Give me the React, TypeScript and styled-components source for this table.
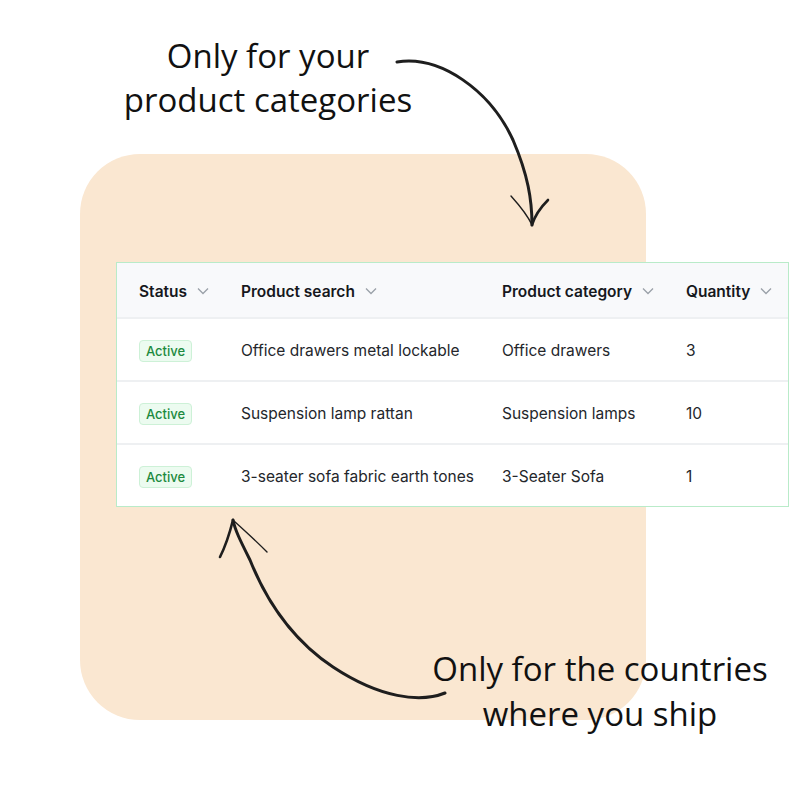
import React from 'react';
import styled, { createGlobalStyle } from 'styled-components';

const GlobalStyle = createGlobalStyle`
  html, body {
    margin: 0;
    padding: 0;
    background: #ffffff;
  }
  * {
    box-sizing: border-box;
  }
`;

const Page = styled.div`
  position: relative;
  width: 800px;
  height: 800px;
  overflow: hidden;
  background: #ffffff;
  font-family: "Open Sans", "Noto Sans", sans-serif;
`;

const TopCaption = styled.div`
  width: 320px;
  margin-left: 108px;
  padding-top: 34px;
  text-align: center;
  font-size: 33px;
  line-height: 44px;
  color: #111;
`;

const Stage = styled.div`
  position: relative;
  margin-top: 32px;
  padding-left: 80px;
`;

const Panel = styled.div`
  width: 566px;
  height: 566px;
  border-radius: 60px;
  background: #fae7d1;
`;

const TableCard = styled.div`
  position: absolute;
  left: 116px;
  top: 108px;
  width: 673px;
  background: #ffffff;
  border: 1px solid #b9ebc9;
  font-family: Inter, "Liberation Sans", sans-serif;
  font-size: 15.5px;
`;

const Row = styled.div<{ $head?: boolean }>`
  display: grid;
  grid-template-columns: 102px 261px 184px 1fr;
  align-items: center;
  height: ${p => (p.$head ? '56px' : '63px')};
  padding: 2px 0 0 22px;
  background: ${p => (p.$head ? '#f8f9fb' : '#ffffff')};
  border-bottom: 2px solid #eef0f2;
  color: #24262b;

  &:last-child {
    border-bottom: none;
    height: 61px;
  }
`;

const HeadCell = styled.div`
  display: flex;
  align-items: center;
  gap: 10px;
  font-weight: 600;
  color: #16181d;
`;

const Cell = styled.div`
  white-space: nowrap;
`;

const Badge = styled.span`
  display: inline-block;
  padding: 2px 6px;
  border: 1px solid #cdf1d7;
  border-radius: 4px;
  background: #ecfbf0;
  color: #1d8a3f;
  font-size: 13px;
  font-weight: 500;
`;

const BottomCaption = styled.div`
  position: absolute;
  left: 410px;
  top: 646px;
  width: 380px;
  text-align: center;
  font-size: 33px;
  line-height: 45px;
  color: #111;
`;

const Arrows = styled.svg`
  position: absolute;
  left: 0;
  top: 0;
  pointer-events: none;
`;

const Chevron = () => (
  <svg width="12" height="8" viewBox="0 0 12 8" fill="none">
    <path d="M1 1.5 L6 6.5 L11 1.5" stroke="#9aa0a8" strokeWidth="1.3" />
  </svg>
);

const columns = ['Status', 'Product search', 'Product category', 'Quantity'];

const rows = [
  { search: 'Office drawers metal lockable', category: 'Office drawers', qty: 3 },
  { search: 'Suspension lamp rattan', category: 'Suspension lamps', qty: 10 },
  { search: '3-seater sofa fabric earth tones', category: '3-Seater Sofa', qty: 1 },
];

const App = () => {
  return (
    <Page>
      <GlobalStyle />
      <TopCaption>
        Only for your
        <br />
        product categories
      </TopCaption>
      <Stage>
        <Panel />
        <TableCard>
          <Row $head>
            {columns.map(c => (
              <HeadCell key={c}>
                {c}
                <Chevron />
              </HeadCell>
            ))}
          </Row>
          {rows.map(r => (
            <Row key={r.search}>
              <Cell>
                <Badge>Active</Badge>
              </Cell>
              <Cell>{r.search}</Cell>
              <Cell>{r.category}</Cell>
              <Cell>{r.qty}</Cell>
            </Row>
          ))}
        </TableCard>
      </Stage>
      <BottomCaption>
        Only for the countries
        <br />
        where you ship
      </BottomCaption>
      {/* hand drawn arrows */}
      <Arrows width="800" height="800" viewBox="0 0 800 800" fill="none">
        <g stroke="#1e1e1e" strokeLinecap="round" strokeLinejoin="round">
          <path d="M397 62 C440 55 490 90 513 140 C528 175 532 200 532 225" strokeWidth="3" />
          <path d="M511 196 C520 206 527 214 532 225" strokeWidth="1.4" />
          <path d="M548 200 C540 208 535 215 532 225" strokeWidth="2.6" />
          <path d="M445 693 C420 703 380 698 333 667 C300 645 270 610 250 560 C240 540 235 530 233 520" strokeWidth="3" />
          <path d="M220 557 C226 545 230 532 233 520" strokeWidth="2.6" />
          <path d="M267 552 C256 541 244 530 234 521" strokeWidth="1.4" />
        </g>
      </Arrows>
    </Page>
  );
};

export default App;
